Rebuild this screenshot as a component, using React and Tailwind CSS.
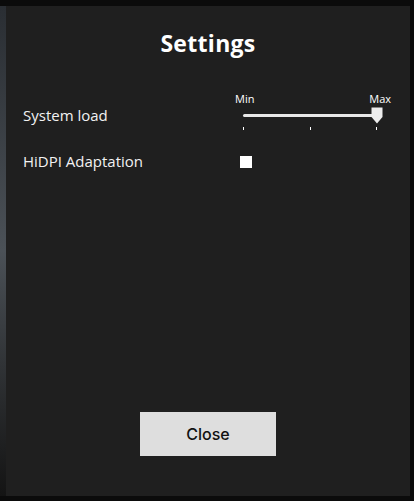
export default function App() {
  return (
    <div
      className="w-[414px] h-[501px] bg-[#0b0b0b] flex pt-[6px] pb-[5px] overflow-hidden"
      style={{ fontFamily: '"Open Sans", "Liberation Sans", sans-serif' }}
    >
      {/* backdrop strip behind the dialog */}
      <div className="w-[6px] h-full bg-gradient-to-b from-[#2a2e33] via-[#4b5157] to-[#141414]" />

      <div className="w-[404px] h-full bg-[#1f1f1f] flex flex-col">
        <h1 className="text-white font-bold text-[23px] leading-[28px] text-center tracking-[0.3px] pt-[23px]">
          Settings
        </h1>

        <div className="flex items-start mt-[35px] pl-[17px]">
          <div className="w-[212px] text-[#f2f2f2] text-[15px] leading-5 pt-[13px]">System load</div>
          <div className="w-[156px] flex flex-col">
            <div className="flex justify-between text-white text-[11px] leading-[14px]">
              <span>Min</span>
              <span>Max</span>
            </div>
            <div className="relative ml-[8px] w-[134px] h-[22px]">
              <div className="absolute left-0 right-0 top-[8px] h-[3px] bg-[#e8e8e8] rounded-full" />
              <svg className="absolute right-[-6px] top-[1px]" width="12" height="17" viewBox="0 0 12 17">
                <path d="M0.5 0.5 H11.5 V10 L6 16.5 L0.5 10 Z" fill="#ececec" />
              </svg>
              <div className="absolute left-0 right-0 top-[21px] flex justify-between">
                <span className="w-px h-[3px] bg-white" />
                <span className="w-px h-[3px] bg-white" />
                <span className="w-px h-[3px] bg-white" />
              </div>
            </div>
          </div>
        </div>

        <div className="flex items-center mt-[23px] pl-[17px]">
          <div className="w-[217px] text-[#f2f2f2] text-[15px] leading-5">HiDPI Adaptation</div>
          <div className="w-[12px] h-[12px] bg-white mt-[2px]" />
        </div>

        <div className="flex-1" />

        <div className="flex justify-center pb-[40px]">
          <button
            className="w-[136px] h-[44px] bg-[#dedede] text-[#111] text-[16px] font-medium"
            style={{ fontFamily: 'Inter, "Open Sans", sans-serif' }}
          >
            Close
          </button>
        </div>
      </div>

      <div className="w-[4px] h-full bg-[#0b0b0b]" />
    </div>
  );
}
